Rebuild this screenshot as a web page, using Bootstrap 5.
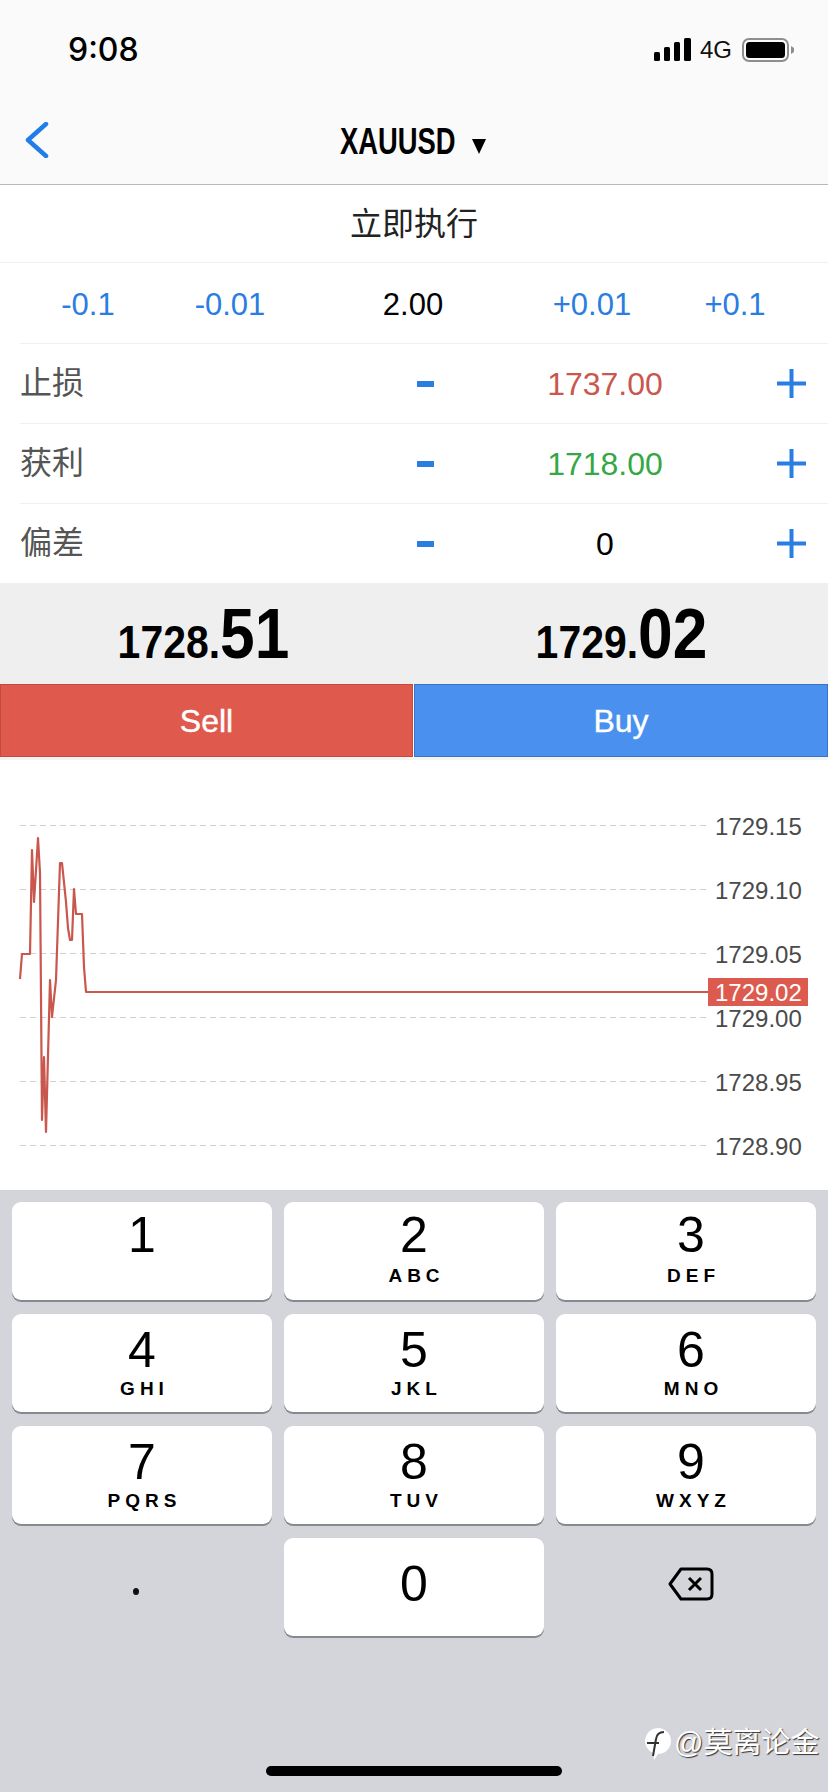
<!DOCTYPE html>
<html lang="zh-CN">

<head>
  <meta charset="UTF-8" />
  <meta name="viewport" content="width=device-width, initial-scale=1.0" />
  <title>XAUUSD</title>
  <link href="https://cdn.jsdelivr.net/npm/bootstrap@5.3.3/dist/css/bootstrap.min.css" rel="stylesheet" />
  <style>
    body {
      width: 828px;
      height: 1792px;
      overflow: hidden;
      background: #fff;
      font-family: "Liberation Sans", "Noto Sans CJK SC", sans-serif;
      color: #000;
    }

    /* header */
    .top-head { height: 185px; background: #fbfafa; border-bottom: 1px solid #b8b8b8; }
    .status-row { height: 100px; padding-left: 68px; }
    .clock { font-family: Inter, "Liberation Sans", sans-serif; font-size: 32px; font-weight: 500; }
    .status-4g { font-size: 24px; margin: 0 10px 0 8px; color: #111; }
    .status-icons { padding-right: 34px; }
    .nav-row { height: 84px; }
    .back-icon { left: 25px; top: 22px; }
    .sym-name { font-size: 36px; font-weight: 700; display: inline-block; transform: scaleX(.76); transform-origin: left; margin-right: -36px; margin-left: -2px; }
    .sym-arrow { margin-left: 15px; margin-top: 8px; }

    /* order form */
    .mode-row { height: 78px; padding-bottom: 5px; font-family: "Noto Sans CJK SC", sans-serif; font-size: 32px; color: #222; border-bottom: 1px solid #f0f0f0; }
    .lot-row { height: 80px; display: grid; grid-template-columns: 176px 108px 258px 100px 186px; text-align: center; font-size: 31px; padding-top: 5px; }
    .lot-step { color: #2a7de1; }
    .form-line { height: 80px; margin-left: 20px; display: grid; grid-template-columns: 365px 80px 280px 83px; align-items: center; border-top: 1px solid #f0f0f0; font-size: 32px; text-align: center; }
    .form-label { font-family: "Noto Sans CJK SC", sans-serif; color: #555; text-align: left; }
    .val-red { color: #c9574d; }
    .val-green { color: #35a745; }
    .plus-wrap { padding-right: 22px; }

    /* price + buttons */
    .quote-band { height: 101px; background: #efefef; }
    .quote-cell { width: 414px; text-align: center; font-weight: 700; line-height: 1; }
    .quote-sell { padding-right: 8px; }
    .price-text { display: inline-block; transform: scaleX(.89); }
    .price-small { font-size: 46px; }
    .price-big { font-size: 70px; }
    .trade-btn { height: 73px; font-size: 32px; color: #fff; border-width: 1px; padding: 0; -webkit-text-stroke: .4px #fff; }
    .trade-btn:hover { color: #fff; }
    .btn-sell { width: 413px; margin-right: 1px; background: #e0594d; border-color: #c44a40; }
    .btn-buy { width: 414px; background: #4a90ef; border-color: #3b74c4; }
    .under-btn { height: 3px; background: #f4f4f4; }

    /* chart */
    .chart-svg { display: block; }
    .axis-label { font-family: "Liberation Sans", sans-serif; font-size: 24px; fill: #4a4a4a; }
    .axis-tag { font-family: "Liberation Sans", sans-serif; font-size: 24px; fill: #fff; }

    /* keyboard */
    .key-panel { height: 602px; background: #d4d5db; padding: 12px; }
    .key-grid { display: grid; grid-template-columns: repeat(3, 260px); grid-auto-rows: 98px; gap: 14px 12px; }
    .num-key { background: #fff; border-radius: 9px; box-shadow: 0 2px 0 #88898d; text-align: center; padding-top: 8px; }
    .num-digit { font-size: 50px; line-height: 50px; display: block; }
    .num-sub { font-size: 19px; font-weight: 700; letter-spacing: 5px; padding-left: 5px; line-height: 20px; margin-top: 6px; display: block; }
    .key-low { padding-top: 11px; }
    .key-low .num-sub { margin-top: 4px; }
    .key-right { padding-left: 10px; }
    .zero-key { padding-top: 21px; }
    .flat-key { display: flex; align-items: center; justify-content: center; }
    .dot-mark { width: 6px; height: 7px; border-radius: 50%; background: #111; margin: 8px 0 0 -12px; }
    .del-icon { margin: -6px 0 0 10px; }
    .home-bar { left: 266px; top: 1766px; width: 296px; height: 10px; border-radius: 5px; background: #000; }
    .water-mark { left: 644px; top: 1726px; color: #fff; font-family: "Liberation Sans", "Noto Sans CJK SC", sans-serif; font-size: 29px; line-height: 34px; text-shadow: 1px 1px 1px #333; white-space: nowrap; }
  </style>
</head>

<body class="position-relative">
  <div class="top-head">
    <div class="status-row d-flex align-items-center justify-content-between">
      <span class="clock">9:08</span>
      <div class="status-icons d-flex align-items-center">
        <svg width="38" height="24" viewBox="0 0 38 24">
          <rect x="0" y="14" width="6" height="9" rx="1.5" fill="#000" />
          <rect x="10" y="9" width="6" height="14" rx="1.5" fill="#000" />
          <rect x="20" y="4" width="6" height="19" rx="1.5" fill="#000" />
          <rect x="30" y="0" width="7" height="23" rx="1.5" fill="#000" />
        </svg>
        <span class="status-4g">4G</span>
        <svg width="52" height="24" viewBox="0 0 52 24">
          <rect x="1" y="1" width="45" height="22" rx="6" fill="none" stroke="#8e8e8e" stroke-width="2" />
          <rect x="4" y="4" width="39" height="16" rx="3.5" fill="#000" />
          <path d="M49 8 L52 10 V14 L49 16 Z" fill="#8e8e8e" />
        </svg>
      </div>
    </div>
    <div class="nav-row position-relative d-flex align-items-center justify-content-center">
      <svg class="back-icon position-absolute" width="24" height="36" viewBox="0 0 24 36">
        <path d="M21 2 L3 18 L21 34" fill="none" stroke="#1f7ee8" stroke-width="4.5" stroke-linecap="round" stroke-linejoin="round" />
      </svg>
      <span class="sym-name">XAUUSD</span>
      <svg class="sym-arrow" width="14" height="15" viewBox="0 0 14 15"><path d="M0 0 H14 L7 15 Z" fill="#000" /></svg>
    </div>
  </div>

  <div class="mode-row d-flex align-items-center justify-content-center">立即执行</div>

  <div class="lot-row align-items-center">
    <span class="lot-step">-0.1</span>
    <span class="lot-step">-0.01</span>
    <span>2.00</span>
    <span class="lot-step">+0.01</span>
    <span class="lot-step">+0.1</span>
  </div>

  <div class="form-line">
    <span class="form-label">止损</span>
    <svg class="mx-auto" width="17" height="6" viewBox="0 0 17 6"><rect width="17" height="6" fill="#2a7de1" /></svg>
    <span class="val-red">1737.00</span>
    <div class="plus-wrap d-flex justify-content-end"><svg width="29" height="29" viewBox="0 0 29 29"><path d="M14.5 0 V29 M0 14.5 H29" stroke="#2a7de1" stroke-width="4" /></svg></div>
  </div>
  <div class="form-line">
    <span class="form-label">获利</span>
    <svg class="mx-auto" width="17" height="6" viewBox="0 0 17 6"><rect width="17" height="6" fill="#2a7de1" /></svg>
    <span class="val-green">1718.00</span>
    <div class="plus-wrap d-flex justify-content-end"><svg width="29" height="29" viewBox="0 0 29 29"><path d="M14.5 0 V29 M0 14.5 H29" stroke="#2a7de1" stroke-width="4" /></svg></div>
  </div>
  <div class="form-line">
    <span class="form-label">偏差</span>
    <svg class="mx-auto" width="17" height="6" viewBox="0 0 17 6"><rect width="17" height="6" fill="#2a7de1" /></svg>
    <span>0</span>
    <div class="plus-wrap d-flex justify-content-end"><svg width="29" height="29" viewBox="0 0 29 29"><path d="M14.5 0 V29 M0 14.5 H29" stroke="#2a7de1" stroke-width="4" /></svg></div>
  </div>

  <div class="quote-band d-flex align-items-center">
    <div class="quote-cell quote-sell"><span class="price-text"><span class="price-small">1728.</span><span class="price-big">51</span></span></div>
    <div class="quote-cell"><span class="price-text"><span class="price-small">1729.</span><span class="price-big">02</span></span></div>
  </div>
  <div class="d-flex">
    <button class="btn rounded-0 trade-btn btn-sell" type="button">Sell</button>
    <button class="btn rounded-0 trade-btn btn-buy" type="button">Buy</button>
  </div>
  <div class="under-btn"></div>

  <svg class="chart-svg" width="828" height="430" viewBox="0 760 828 430">
    <g stroke="#cfcfcf" stroke-width="1" stroke-dasharray="6 4">
      <line x1="20" y1="825.5" x2="708" y2="825.5" />
      <line x1="20" y1="889.5" x2="708" y2="889.5" />
      <line x1="20" y1="953.5" x2="708" y2="953.5" />
      <line x1="20" y1="1017.5" x2="708" y2="1017.5" />
      <line x1="20" y1="1081.5" x2="708" y2="1081.5" />
      <line x1="20" y1="1145.5" x2="708" y2="1145.5" />
    </g>
    <polyline fill="none" stroke="#c9574d" stroke-width="2.2" stroke-linejoin="round"
      points="20,979 22,954 30,954 32,850 34,902 38,838 40,873 42,1120 44,1057 46,1132 50,980 52,1017 56,980 60,863 62,863 66,902 68,928 70,940 72,940 74,889 76,914 82,914 84,967 86,992 708,992" />
    <text class="axis-label" x="715" y="835">1729.15</text>
    <text class="axis-label" x="715" y="899">1729.10</text>
    <text class="axis-label" x="715" y="963">1729.05</text>
    <text class="axis-label" x="715" y="1027">1729.00</text>
    <text class="axis-label" x="715" y="1091">1728.95</text>
    <text class="axis-label" x="715" y="1155">1728.90</text>
    <rect x="708" y="978" width="100" height="28" fill="#dd5b4e" />
    <text class="axis-tag" x="715" y="1001">1729.02</text>
  </svg>

  <div class="key-panel">
    <div class="key-grid">
      <div class="num-key"><span class="num-digit">1</span></div>
      <div class="num-key"><span class="num-digit">2</span><span class="num-sub">ABC</span></div>
      <div class="num-key key-right"><span class="num-digit">3</span><span class="num-sub">DEF</span></div>
      <div class="num-key key-low"><span class="num-digit">4</span><span class="num-sub">GHI</span></div>
      <div class="num-key key-low"><span class="num-digit">5</span><span class="num-sub">JKL</span></div>
      <div class="num-key key-low key-right"><span class="num-digit">6</span><span class="num-sub">MNO</span></div>
      <div class="num-key key-low"><span class="num-digit">7</span><span class="num-sub">PQRS</span></div>
      <div class="num-key key-low"><span class="num-digit">8</span><span class="num-sub">TUV</span></div>
      <div class="num-key key-low key-right"><span class="num-digit">9</span><span class="num-sub">WXYZ</span></div>
      <div class="flat-key"><span class="dot-mark"></span></div>
      <div class="num-key zero-key"><span class="num-digit">0</span></div>
      <div class="flat-key">
        <svg class="del-icon" width="46" height="34" viewBox="0 0 46 34">
          <path d="M13 2 H39 Q44 2 44 7 V27 Q44 32 39 32 H13 L2 17 Z" fill="none" stroke="#000" stroke-width="3" stroke-linejoin="round" />
          <path d="M21 11 L33 23 M33 11 L21 23" stroke="#000" stroke-width="3" />
        </svg>
      </div>
    </div>
  </div>

  <div class="home-bar position-absolute"></div>
  <div class="water-mark position-absolute d-flex align-items-center">
    <svg width="30" height="34" viewBox="0 0 30 34">
      <path d="M14 2 A13 13 0 1 1 14 28 L10 34 L9 27 A13 13 0 0 1 14 2 Z" fill="#fff" />
      <path d="M3 17 H15 M20 6 Q13 6 12 13 L9 30" fill="none" stroke="#333" stroke-width="2" />
    </svg>
    <span>@莫离论金</span>
  </div>

  <script src="https://cdn.jsdelivr.net/npm/bootstrap@5.3.3/dist/js/bootstrap.bundle.min.js"></script>
</body>

</html>
